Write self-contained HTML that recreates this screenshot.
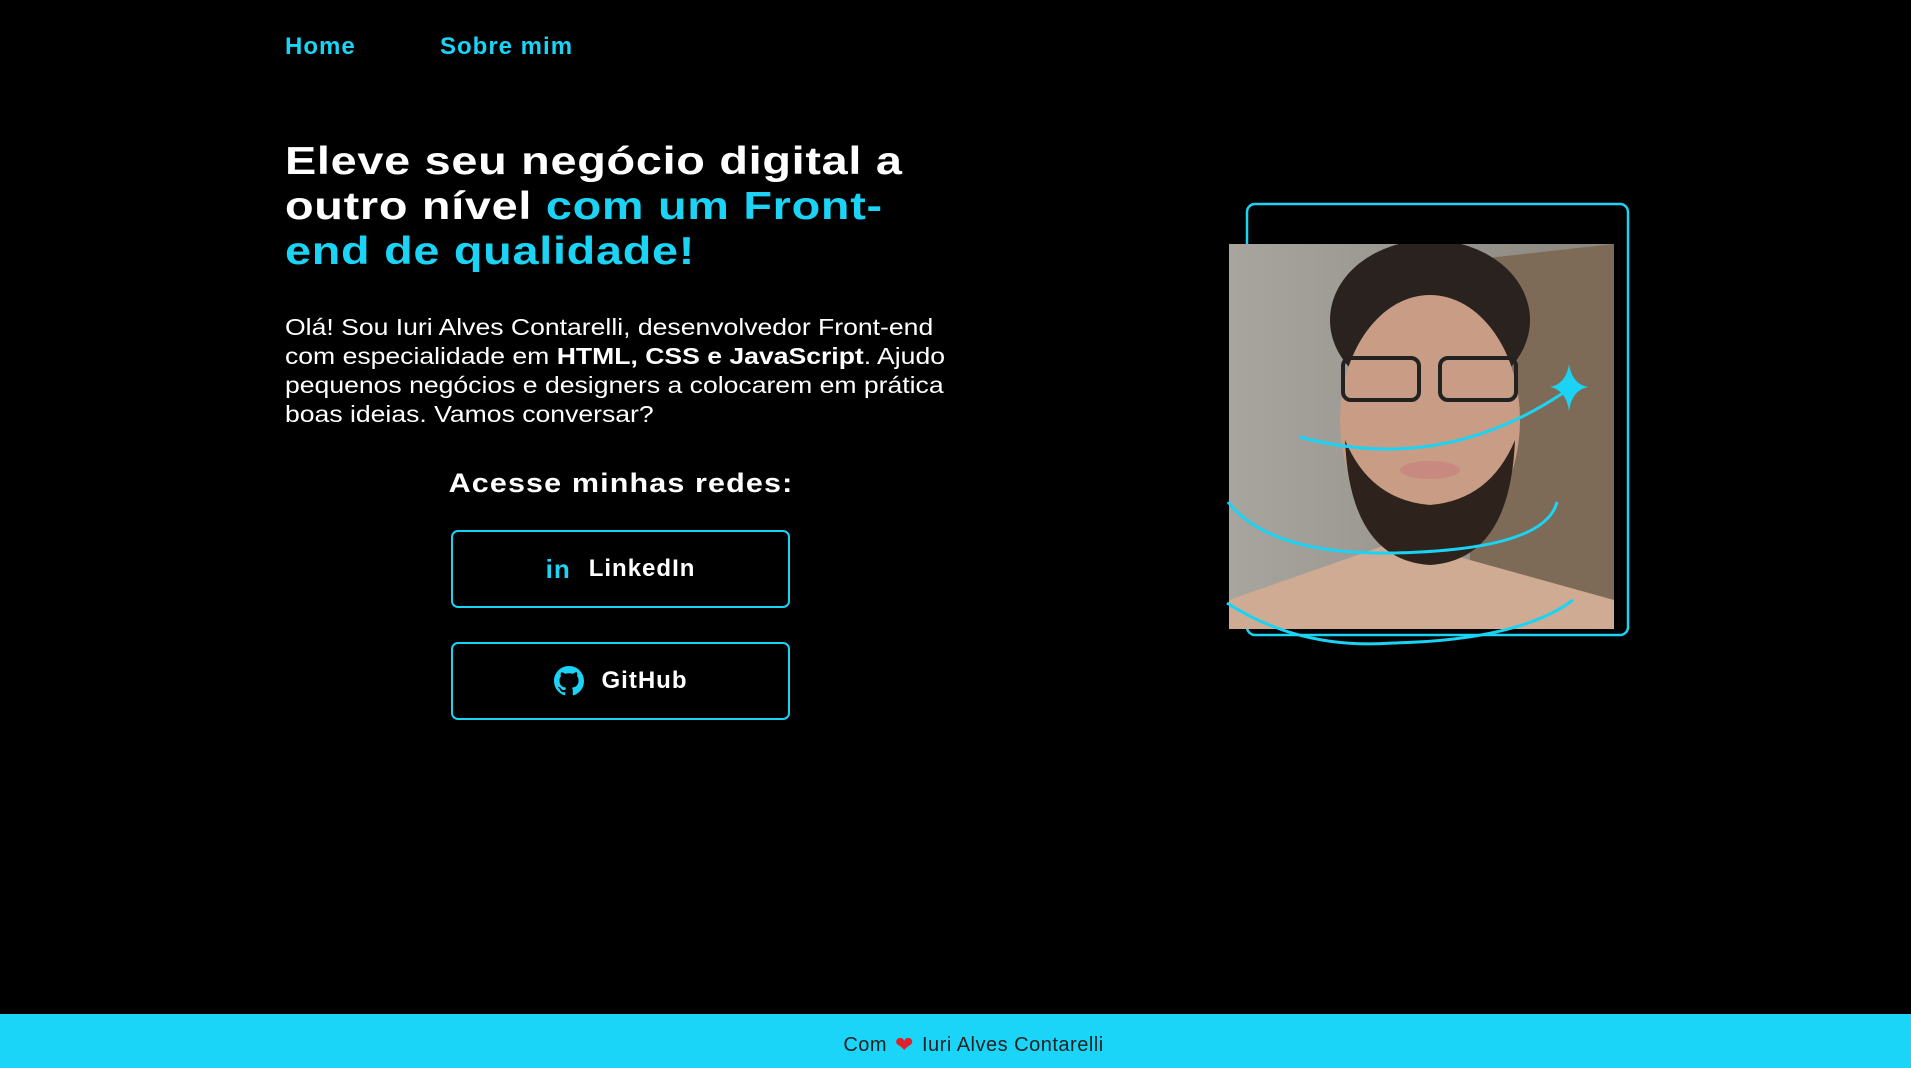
<!DOCTYPE html>
<html><head><meta charset="utf-8"><style>
*{margin:0;padding:0;box-sizing:border-box}
body{width:1911px;height:1068px;background:#000;position:relative;overflow:hidden;font-family:"Liberation Sans",sans-serif;color:#fff}
.nav a{position:absolute;top:33px;color:#1ad3f5;font-size:24px;font-weight:bold;text-decoration:none;letter-spacing:1px}
h1{position:absolute;left:285px;top:139px;font-size:39px;line-height:45px;font-weight:bold;letter-spacing:0.6px;white-space:nowrap;transform:scaleX(1.2);transform-origin:0 0}
.c{color:#1ad3f5}
p{position:absolute;left:285px;top:313px;font-size:23px;line-height:29px;white-space:nowrap;transform:scaleX(1.155);transform-origin:0 0}
h2{position:absolute;left:420px;top:468px;width:402px;text-align:center;font-size:27px;letter-spacing:1px;font-weight:bold;transform:scaleX(1.13)}
.btn{position:absolute;left:451px;width:339px;height:78px;border:2px solid #1ad3f5;border-radius:7px;display:flex;align-items:center;justify-content:center;font-size:24px;font-weight:bold;gap:18px;letter-spacing:1px}
footer{position:absolute;left:0;top:1014px;width:1911px;height:54px;background:#1ad5f8;color:#222;font-size:20px;display:flex;align-items:center;justify-content:center;gap:8px;padding-top:8px;padding-left:36px;letter-spacing:0.5px}
</style></head><body>
<div class="nav"><a style="left:285px">Home</a><a style="left:440px">Sobre mim</a></div>
<h1>Eleve seu negócio digital a<br>outro nível <span class="c">com um Front-</span><br><span class="c">end de qualidade!</span></h1>
<p>Olá! Sou Iuri Alves Contarelli, desenvolvedor Front-end<br>com especialidade em <b>HTML, CSS e JavaScript</b>. Ajudo<br>pequenos negócios e designers a colocarem em prática<br>boas ideias. Vamos conversar?</p>
<h2>Acesse minhas redes:</h2>
<div class="btn" style="top:530px"><span style="color:#1ad3f5;font-size:26px;font-weight:bold">in</span><span>LinkedIn</span></div>
<div class="btn" style="top:642px"><svg width="30" height="30" viewBox="0 0 16 16"><path fill="#1ad3f5" d="M8 0C3.58 0 0 3.58 0 8c0 3.540 2.290 6.530 5.470 7.590.4.07.55-.17.55-.38v-1.33c-2.23.48-2.7-1.07-2.7-1.070-.36-.92-.89-1.170-.89-1.17-.73-.5.06-.49.06-.49.8.06 1.23.83 1.23.83.71 1.22 1.87.87 2.33.66.07-.52.28-.87.5-1.07-1.78-.2-3.64-.89-3.64-3.95 0-.87.31-1.59.82-2.15-.08-.2-.36-1.02.08-2.12 0 0 .67-.21 2.2.82a7.6 7.6 0 0 1 4 0c1.53-1.04 2.2-.82 2.2-.82.44 1.1.16 1.92.08 2.12.51.56.82 1.27.82 2.15 0 3.07-1.87 3.75-3.65 3.95.29.25.54.73.54 1.48v2.2c0 .21.15.46.55.38A8 8 0 0 0 16 8c0-4.42-3.58-8-8-8z"/></svg><span>GitHub</span></div>
<svg style="position:absolute;left:0;top:0" width="1911" height="1068">
<defs><clipPath id="ph"><rect x="1229" y="244" width="385" height="385"/></clipPath>
<linearGradient id="wall" x1="0" x2="1"><stop offset="0" stop-color="#a8a49e"/><stop offset="1" stop-color="#8a8680"/></linearGradient></defs>
<rect x="1247" y="204" width="381" height="431" rx="8" fill="none" stroke="#1ad3f5" stroke-width="2.5"/>
<g clip-path="url(#ph)">
<rect x="1229" y="244" width="385" height="385" fill="url(#wall)"/>
<polygon points="1470,260 1614,244 1614,629 1470,629" fill="#7d6b58"/>
<polygon points="1229,600 1400,540 1470,560 1614,600 1614,629 1229,629" fill="#cfab93"/>
<ellipse cx="1430" cy="320" rx="100" ry="80" fill="#2a221e"/>
<ellipse cx="1430" cy="420" rx="90" ry="125" fill="#c99d85"/>
<path d="M1345 440 Q1350 560 1430 565 Q1510 560 1515 440 Q1490 500 1430 505 Q1370 500 1345 440Z" fill="#2d221c"/>
<ellipse cx="1430" cy="470" rx="30" ry="9" fill="#c88a80"/>
<rect x="1343" y="358" width="76" height="42" rx="8" fill="none" stroke="#222" stroke-width="4"/>
<rect x="1440" y="358" width="76" height="42" rx="8" fill="none" stroke="#222" stroke-width="4"/>
</g>
<g fill="none" stroke="#1ad3f5" stroke-width="3">
<path d="M1300 437 Q1440 475 1563 393"/>
<path d="M1228 502 Q1270 555 1393 553 Q1545 550 1557 502"/>
<path d="M1227 603 Q1300 650 1393 643 Q1520 640 1573 600"/>
</g>
<path d="M1569 364 Q1572 384 1588 387 Q1572 390 1569 411 Q1566 390 1550 387 Q1566 384 1569 364Z" fill="#1ad3f5"/>
</svg>
<footer>Com <span style="color:#e0202a;font-size:22px">❤</span> Iuri Alves Contarelli</footer>
</body></html>
